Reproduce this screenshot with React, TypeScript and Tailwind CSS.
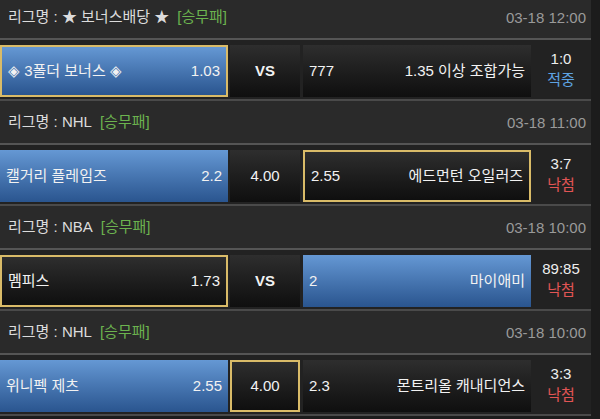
import React from 'react'

type Cell = {
  left: string
  right: string
  tone: 'blue' | 'dark'
  picked?: boolean
}

type Game = {
  league: string
  date: string
  home: Cell
  mid: { label: string; bold?: boolean; picked?: boolean }
  away: Cell
  score: string
  result: string
  win?: boolean
}

const games: Game[] = [
  {
    league: '★ 보너스배당 ★',
    date: '03-18 12:00',
    home: { left: '◈ 3폴더 보너스 ◈', right: '1.03', tone: 'blue', picked: true },
    mid: { label: 'VS', bold: true },
    away: { left: '777', right: '1.35 이상 조합가능', tone: 'dark' },
    score: '1:0',
    result: '적중',
    win: true,
  },
  {
    league: 'NHL',
    date: '03-18 11:00',
    home: { left: '캘거리 플레임즈', right: '2.2', tone: 'blue' },
    mid: { label: '4.00' },
    away: { left: '2.55', right: '에드먼턴 오일러즈', tone: 'dark', picked: true },
    score: '3:7',
    result: '낙첨',
  },
  {
    league: 'NBA',
    date: '03-18 10:00',
    home: { left: '멤피스', right: '1.73', tone: 'dark', picked: true },
    mid: { label: 'VS', bold: true },
    away: { left: '2', right: '마이애미', tone: 'blue' },
    score: '89:85',
    result: '낙첨',
  },
  {
    league: 'NHL',
    date: '03-18 10:00',
    home: { left: '위니펙 제츠', right: '2.55', tone: 'blue' },
    mid: { label: '4.00', picked: true },
    away: { left: '2.3', right: '몬트리올 캐내디언스', tone: 'dark' },
    score: '3:3',
    result: '낙첨',
  },
]

function OddsCell({ cell }: { cell: Cell }) {
  const bg =
    cell.tone === 'blue'
      ? 'bg-gradient-to-b from-[#6598d4] to-[#2a558f]'
      : 'bg-gradient-to-b from-[#2e2e2e] to-[#0f0f0f]'
  return (
    <div
      className={`flex w-[228px] items-center justify-between px-[6px] text-[15px] text-[#f2f2f2] ${bg} ${
        cell.picked ? 'border-2 border-[#d9bb68]' : ''
      }`}
    >
      <span>{cell.left}</span>
      <span>{cell.right}</span>
    </div>
  )
}

export default function App() {
  return (
    <div
      className="h-[419px] w-[600px] overflow-hidden bg-[#1c1c1c]"
      style={{ fontFamily: '"Liberation Sans", "Noto Sans CJK KR", sans-serif' }}
    >
      <div className="mt-[-4px] w-[591px]">
        {games.map((g, i) => (
          <div key={i}>
            <div className="flex h-[44px] items-center justify-between border-b-2 border-[#555] bg-[#2a2a2a] pl-2 pr-[5px] text-[15px]">
              <div className="flex items-center gap-2">
                <span className="text-[#dcdcdc]">리그명 : {g.league}</span>
                <span className="text-[#6cb34f]">[승무패]</span>
              </div>
              <span className="pt-[2px] text-[#9a9a9a]">{g.date}</span>
            </div>
            <div className="flex h-[61px] border-b-2 border-[#4a4a4a] bg-[#222] pt-[5px] pb-[2px]">
              <OddsCell cell={g.home} />
              <div
                className={`ml-[2px] flex w-[70px] items-center justify-center bg-gradient-to-b from-[#2e2e2e] to-[#0f0f0f] text-[15px] text-[#f2f2f2] ${
                  g.mid.bold ? 'font-bold' : ''
                } ${g.mid.picked ? 'border-2 border-[#d9bb68]' : ''}`}
              >
                {g.mid.label}
              </div>
              <div className="w-[3px]" />
              <OddsCell cell={g.away} />
              <div className="flex flex-1 flex-col items-center justify-center pb-[4px] text-[15px] leading-[21px]">
                <span className="text-[#eeeeee]">{g.score}</span>
                <span className={g.win ? 'text-[#5ea2e2]' : 'text-[#e25555]'}>{g.result}</span>
              </div>
            </div>
          </div>
        ))}
      </div>
    </div>
  )
}
